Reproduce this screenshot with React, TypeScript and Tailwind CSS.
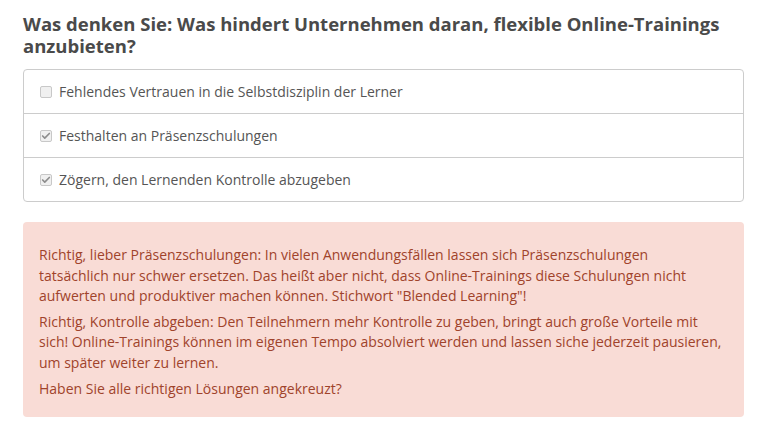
import { Check } from 'lucide-react';

const options = [
  { label: 'Fehlendes Vertrauen in die Selbstdisziplin der Lerner', checked: false },
  { label: 'Festhalten an Präsenzschulungen', checked: true },
  { label: 'Zögern, den Lernenden Kontrolle abzugeben', checked: true },
];

function Box({ checked }: { checked: boolean }) {
  return (
    <span className="flex h-[12px] w-[12px] shrink-0 items-center justify-center rounded-[2px] border border-[#c8c8c8] bg-[#f0f0f0]">
      {checked && <Check className="h-[10px] w-[10px] text-[#8d8d8d]" strokeWidth={4} />}
    </span>
  );
}

export default function App() {
  return (
    <div
      className="min-h-[433px] w-[767px] bg-white px-[23px] pt-[13px] text-[#4a4a4a]"
      style={{ fontFamily: '"Open Sans", sans-serif' }}
    >
      <h2 className="mr-[20px] text-[18.5px] font-bold leading-[22px] text-[#4a4a4a]">
        Was denken Sie: Was hindert Unternehmen daran, flexible Online-Trainings anzubieten?
      </h2>

      <div className="mt-[12px] w-[721px] divide-y divide-[#cccccc] rounded-[4px] border border-[#cccccc]">
        {options.map((o) => (
          <div
            key={o.label}
            className="box-content flex h-[43px] items-center gap-[7px] pl-[16px] text-[14px] text-[#555555]"
          >
            <Box checked={o.checked} />
            <span>{o.label}</span>
          </div>
        ))}
      </div>

      <div className="mt-[20px] w-[721px] rounded-[4px] bg-[#f9dcd6] px-[16px] pb-[18px] pt-[23px] text-[14px] leading-[20.6px] text-[#a0432b]">
        <p className="mb-[5px]">
          Richtig, lieber Präsenzschulungen: In vielen Anwendungsfällen lassen sich Präsenzschulungen
          <br />
          tatsächlich nur schwer ersetzen. Das heißt aber nicht, dass Online-Trainings diese Schulungen nicht
          aufwerten und produktiver machen können. Stichwort "Blended Learning"!
        </p>
        <p className="mb-[5px]">
          Richtig, Kontrolle abgeben: Den Teilnehmern mehr Kontrolle zu geben, bringt auch große Vorteile mit sich!
          Online-Trainings können im eigenen Tempo absolviert werden und lassen siche jederzeit pausieren, um später
          weiter zu lernen.
        </p>
        <p>Haben Sie alle richtigen Lösungen angekreuzt?</p>
      </div>
    </div>
  );
}
